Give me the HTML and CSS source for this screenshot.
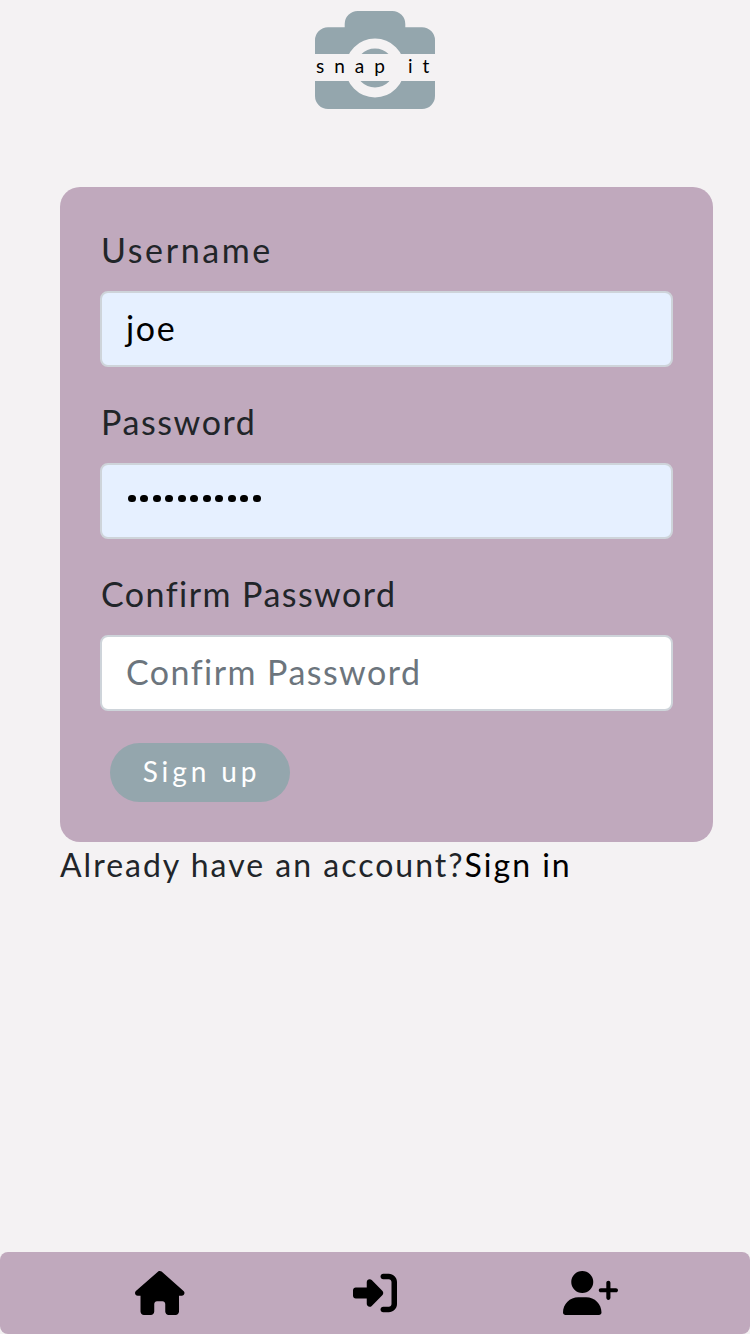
FILE: index.html
```
<!DOCTYPE html>
<html lang="en">
<head>
<meta charset="utf-8">
<title>Snap it</title>
<link rel="stylesheet" href="styles.css">
</head>
<body>
<header class="header">
  <div class="logo">
    <svg class="logo-camera" viewBox="0 0 120 100" width="120" height="100" aria-hidden="true">
      <path fill="#94a6ad" d="M13 17.300H29.700V14A13 13 0 0 1 42.700 1H77.300A13 13 0 0 1 90.300 14V17.300H107A13 13 0 0 1 120 30.300V86A13 13 0 0 1 107 99H13A13 13 0 0 1 0 86V30.300A13 13 0 0 1 13 17.300Z"/>
      <circle cx="60" cy="58" r="24.500" fill="none" stroke="#f4f2f3" stroke-width="10"/>
    </svg>
    <span class="logo-text"><span class="logo-word">snap</span><span class="logo-word">it</span></span>
  </div>
</header>
<main class="content">
  <form class="card">
    <label class="label username">Username</label>
    <div class="field filled"><span class="value">joe</span></div>
    <label class="label password">Password</label>
    <div class="field filled dots"><i></i><i></i><i></i><i></i><i></i><i></i><i></i><i></i><i></i><i></i><i></i></div>
    <label class="label confirm">Confirm Password</label>
    <div class="field placeholder"><span class="value confirm">Confirm Password</span></div>
    <button type="button" class="submit">Sign up</button>
  </form>
  <p class="account"><span class="question">Already have an account?</span><a class="signin">Sign in</a></p>
</main>
<nav class="nav">
  <a class="nav-item"><svg width="49.500" height="44" viewBox="0 0 576 512"><path d="M575.8 255.500c0 18-15 32.100-32 32.100h-32l.7 160.200c0 2.700-.2 5.400-.5 8.100V472c0 22.100-17.900 40-40 40H392c-22.100 0-40-17.900-40-40V384c0-17.700-14.300-32-32-32H256c-17.700 0-32 14.300-32 32v88c0 22.100-17.900 40-40 40H104c-22.100 0-40-17.900-40-40V287.600H32c-18 0-32-14-32-32.100c0-9 3-17 10-24L266.400 8c7-7 15-8 22-8s15 2 21 7L564.800 231.500c8 7 12 15 11 24z"/></svg></a>
  <a class="nav-item nav-signin"><svg width="44" height="44" viewBox="0 0 512 512"><path d="M217.900 105.900L340.700 228.700c7.200 7.200 11.300 17.100 11.300 27.300s-4.100 20.100-11.300 27.300L217.900 406.100c-6.400 6.400-15 9.900-24 9.900c-18.700 0-33.900-15.200-33.900-33.900V320H32c-17.700 0-32-14.300-32-32v-64c0-17.700 14.300-32 32-32h128v-62.100c0-18.700 15.200-33.900 33.900-33.900c9 0 17.600 3.600 24 9.900zM352 416h64c17.700 0 32-14.300 32-32V128c0-17.700-14.300-32-32-32h-64c-17.700 0-32-14.300-32-32s14.300-32 32-32h64c53 0 96 43 96 96v256c0 53-43 96-96 96h-64c-17.700 0-32-14.300-32-32s14.300-32 32-32z"/></svg></a>
  <a class="nav-item"><svg width="55" height="44" viewBox="0 0 640 512"><path d="M96 128a128 128 0 1 1 256 0A128 128 0 1 1 96 128zM0 482.300C0 383.800 79.800 304 178.300 304h91.400C368.200 304 448 383.800 448 482.300c0 16.400-13.300 29.700-29.700 29.700H29.700C13.300 512 0 498.700 0 482.300zM504 312V248H440c-13.300 0-24-10.700-24-24s10.700-24 24-24h64V136c0-13.300 10.700-24 24-24s24 10.700 24 24v64h64c13.300 0 24 10.700 24 24s-10.700 24-24 24H552v64c0 13.300-10.700 24-24 24s-24-10.700-24-24z"/></svg></a>
</nav>
</body>
</html>
```

FILE: styles.css
```
* { box-sizing: border-box; }
body {
  margin: 0;
  height: 1334px;
  display: flex;
  flex-direction: column;
  background: #f4f2f3;
  color: #212529;
  font-family: Lato, "Open Sans", sans-serif;
  font-size: 34px;
  white-space: nowrap;
}
.header { height: 187px; padding-top: 10px; display: flex; justify-content: center; align-items: flex-start; }
.logo { position: relative; width: 120px; height: 100px; }
.logo-camera { display: block; }
.logo-text {
  position: absolute;
  top: 44px;
  left: 0;
  width: 120px;
  height: 27px;
  padding-left: 1px;
  display: flex;
  gap: 13px;
  background: #f4f2f3;
  color: #000;
  font-size: 19px;
  line-height: 24px;
  letter-spacing: 10px;
}
.content { flex: 1; padding: 0 37px 0 60px; }
.card {
  height: 655px;
  padding: 40px;
  display: flex;
  flex-direction: column;
  background: #c0a9bd;
  border-radius: 20px;
}
.label { height: 48px; line-height: 45px; margin-bottom: 16px; padding-left: 1px; }
.field {
  height: 76px;
  margin-bottom: 32px;
  padding: 0 24px;
  display: flex;
  align-items: center;
  border: 2px solid #ced4da;
  border-radius: 8px;
  background: #fff;
  line-height: 48px;
}
.value { padding-bottom: 3px; letter-spacing: 1.700px; }
.filled { background: #e6f0ff; color: #000; }
.placeholder { color: #6c757d; }
.dots { gap: 4.700px; padding-left: 26px; padding-bottom: 5px; }
.dots i { width: 7.800px; height: 7.800px; border-radius: 50%; background: #000; }
.submit {
  align-self: flex-start;
  width: 180px;
  height: 59px;
  margin-left: 10px;
  padding: 0 0 3px 3px;
  border: 0;
  border-radius: 30px;
  background: #94a6ad;
  color: #fff;
  font: 28px Lato, sans-serif;
  letter-spacing: 3.900px;
}
.username { letter-spacing: 2.600px; }
.password { letter-spacing: 1.600px; }
.confirm { letter-spacing: 1.450px; }
.account { margin: 0; line-height: 46px; font-size: 32px; letter-spacing: 2px; }
.signin { color: #000; }
.nav {
  height: 82px;
  display: flex;
  justify-content: space-between;
  align-items: center;
  padding: 0 132.500px 1px 135px;
  border-radius: 8px;
  background: #c0a9bd;
}
.nav-item { display: flex; }
.nav-signin { padding-left: 2px; }
```
